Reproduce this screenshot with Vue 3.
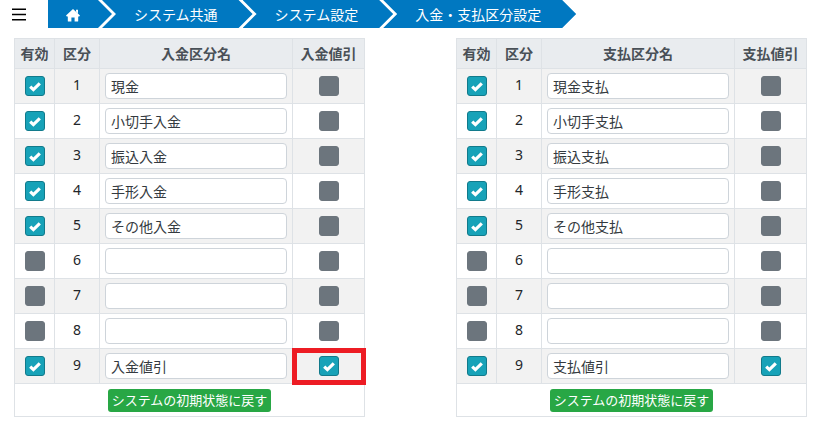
<script setup>
import { reactive } from 'vue'

const crumbs = ['システム共通', 'システム設定', '入金・支払区分設定']

function makeTable(id, prefix, names, marked) {
  return {
    id,
    nameLabel: prefix + '区分名',
    discountLabel: prefix + '値引',
    rows: Array.from({ length: 9 }, (_, i) => ({
      no: i + 1,
      enabled: !!names[i],
      name: names[i] || '',
      discount: i === 8,
      marked: marked && i === 8,
    })),
  }
}

const tables = reactive([
  makeTable('deposit', '入金', ['現金', '小切手入金', '振込入金', '手形入金', 'その他入金', '', '', '', '入金値引'], true),
  makeTable('payment', '支払', ['現金支払', '小切手支払', '振込支払', '手形支払', 'その他支払', '', '', '', '支払値引'], false),
])
</script>

<template>
  <header class="topbar">
    <button class="menu" type="button" aria-label="メニュー">
      <svg viewBox="0 0 14 13" width="14" height="13">
        <path d="M0 1.2H14M0 6.5H14M0 11.8H14" stroke="#000" stroke-width="1.4" />
      </svg>
    </button>
    <nav class="crumbs">
      <a class="crumb home" href="#" aria-label="ホーム">
        <svg viewBox="0 0 14 13" width="14" height="13">
          <path fill="#fff" d="M7 0 L14 6.6 L13.2 7.4 H12.2 V12 Q12.2 12.6 11.6 12.6 H8.6 V8.4 H5.4 V12.6 H2.4 Q1.8 12.6 1.8 12 V7.4 H.8 L0 6.6 Z M10 .8 H12 V4.4 L10 2.6 Z" />
        </svg>
      </a>
      <a v-for="c in crumbs" :key="c" class="crumb" href="#">{{ c }}</a>
    </nav>
  </header>

  <main class="panels">
    <table v-for="t in tables" :key="t.id" class="grid">
      <colgroup>
        <col class="c-enabled" />
        <col class="c-no" />
        <col />
        <col class="c-discount" />
      </colgroup>
      <thead>
        <tr>
          <th>有効</th>
          <th>区分</th>
          <th>{{ t.nameLabel }}</th>
          <th>{{ t.discountLabel }}</th>
        </tr>
      </thead>
      <tbody>
        <tr v-for="r in t.rows" :key="r.no">
          <td><input v-model="r.enabled" class="check" type="checkbox" :aria-label="'有効 ' + r.no" /></td>
          <td class="no">{{ r.no }}</td>
          <td><input v-model="r.name" class="name" type="text" :aria-label="t.nameLabel + ' ' + r.no" /></td>
          <td :class="{ marked: r.marked }">
            <input v-model="r.discount" class="check" type="checkbox" :aria-label="t.discountLabel + ' ' + r.no" />
          </td>
        </tr>
      </tbody>
      <tfoot>
        <tr>
          <td colspan="4"><button class="reset" type="button">システムの初期状態に戻す</button></td>
        </tr>
      </tfoot>
    </table>
  </main>
</template>

<style>
body {
  background: #fff;
}
</style>

<style scoped>
.topbar,
.panels,
.name,
.reset {
  font-family: "Noto Sans", "Noto Sans CJK JP", sans-serif;
  font-size: 14px;
  color: #212529;
}

.topbar {
  display: flex;
  height: 28px;
}

.menu {
  width: 48px;
  padding: 0 10px 0 12px;
  border: 0;
  background: none;
  display: flex;
  align-items: center;
}

.crumbs {
  display: flex;
}

.crumb {
  display: flex;
  align-items: center;
  margin-left: -10px;
  padding: 2px 35px 0 32px;
  background: #0078c1;
  color: #fff;
  line-height: 20px;
  text-decoration: none;
  white-space: nowrap;
  clip-path: polygon(0 0, calc(100% - 14px) 0, 100% 50%, calc(100% - 14px) 100%, 0 100%, 14px 50%);
}

.crumb.home {
  margin-left: 0;
  padding: 2px 32px 0 18px;
  clip-path: polygon(0 0, calc(100% - 14px) 0, 100% 50%, calc(100% - 14px) 100%, 0 100%);
}

.panels {
  display: grid;
  grid-template-columns: 1fr 1fr;
  column-gap: 91px;
  padding: 10px 6px 6px 14px;
}

.grid {
  width: 100%;
  table-layout: fixed;
  border-collapse: collapse;
}

.c-enabled {
  width: 40px;
}

.c-no {
  width: 45px;
}

.c-discount {
  width: 72px;
}

th,
td {
  border: 1px solid #dee2e6;
  padding: 4px 5px;
  text-align: center;
  vertical-align: middle;
}

th {
  padding: 4px 0;
  background: #e9ecef;
  color: #495057;
  font-weight: 700;
  line-height: 21px;
}

tbody tr:nth-child(odd) {
  background: #f2f2f2;
}

tfoot td {
  padding: 5px 5px 4px;
}

.no {
  padding: 4px 0 6px;
  line-height: 20px;
}

.name {
  display: block;
  box-sizing: border-box;
  width: 100%;
  height: 26px;
  padding: 0 5px;
  border: 1px solid #ced4da;
  border-radius: 4px;
  background: #fff;
  color: #343a40;
}

.check {
  display: block;
  appearance: none;
  width: 20px;
  height: 20px;
  margin: 0 auto;
  border: 1px solid #6c757d;
  border-radius: 3px;
  background: #6c757d;
}

.check:checked {
  border-color: #117a8b;
  background: #17a2b8 url("data:image/svg+xml,%3Csvg xmlns='http://www.w3.org/2000/svg' viewBox='0 0 18 18'%3E%3Cpath d='M4.2 9.6L7.4 12.6L13.8 6.4' fill='none' stroke='%23fff' stroke-width='3.2'/%3E%3C/svg%3E") center / 18px 18px no-repeat;
}

.marked {
  outline: 5px solid #ed1c24;
  outline-offset: -4px;
}

.reset {
  height: 23px;
  padding: 0 4px;
  border: 0;
  border-radius: 3px;
  background: #28a745;
  color: #fff;
  font-size: 13px;
  line-height: 23px;
  vertical-align: top;
}
</style>
